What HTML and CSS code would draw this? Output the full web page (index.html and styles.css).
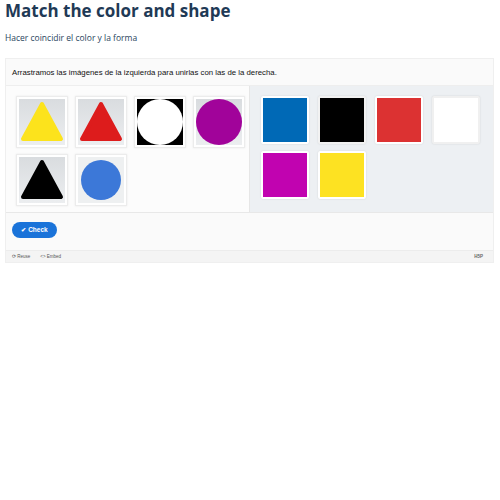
FILE: index.html
```html
<!DOCTYPE html>
<html>
<head>
<meta charset="utf-8">
<link rel="stylesheet" href="styles.css">
</head>
<body>
<div class="page">
  <h1 class="title">Match the color and shape</h1>
  <p class="sub">Hacer coincidir el color y la forma</p>
  <div class="h5p">
    <div class="intro">Arrastramos las imágenes de la izquierda para unirlas con las de la derecha.</div>
    <div class="dnd">
      <div class="col left">
        <div class="drag"><div class="img grey"><svg viewBox="0 0 46 46"><polygon points="23,5 42,40 4,40" fill="#fce31c" stroke="#fce31c" stroke-width="4" stroke-linejoin="round"/></svg></div></div>
        <div class="drag"><div class="img grey"><svg viewBox="0 0 46 46"><polygon points="23,5 42,40 4,40" fill="#dd1c1c" stroke="#dd1c1c" stroke-width="4" stroke-linejoin="round"/></svg></div></div>
        <div class="drag"><div class="img black"><svg viewBox="0 0 46 46"><circle cx="23" cy="23" r="23" fill="#fff"/></svg></div></div>
        <div class="drag"><div class="img grey"><svg viewBox="0 0 46 46"><circle cx="23" cy="23" r="23" fill="#a1039a"/></svg></div></div>
        <div class="drag"><div class="img grey"><svg viewBox="0 0 46 46"><polygon points="23,5 42,40 4,40" fill="#000" stroke="#000" stroke-width="4" stroke-linejoin="round"/></svg></div></div>
        <div class="drag"><div class="img light"><svg viewBox="0 0 46 46"><circle cx="23" cy="23" r="20" fill="#3c78d8"/></svg></div></div>
      </div>
      <div class="col right">
        <div class="drop c-blue"></div>
        <div class="drop c-black"></div>
        <div class="drop c-red"></div>
        <div class="drop c-white"></div>
        <div class="drop c-magenta"></div>
        <div class="drop c-yellow"></div>
      </div>
    </div>
    <div class="actions">
      <button class="check"><span class="tick">✔</span> Check</button>
    </div>
    <div class="footer">
      <span class="flink">⟳ Reuse</span>
      <span class="flink">&lt;&gt; Embed</span>
      <span class="logo">H5P</span>
    </div>
  </div>
</div>
</body>
</html>
```
FILE: styles.css
```css
html, body {
  margin: 0;
  padding: 0;
  background: #ffffff;
}
.page {
  padding: 0 6px 0 5px;
}
.title {
  font-family: "Open Sans", sans-serif;
  font-weight: 700;
  font-size: 17px;
  line-height: 22px;
  color: #1f3a56;
  margin: 0;
  padding-top: 0;
}
.sub {
  font-family: "Open Sans", sans-serif;
  font-size: 8.5px;
  color: #2a4560;
  margin: 10px 0 0 0;
  line-height: 12px;
}
.h5p {
  margin-top: 14px;
  border: 1px solid #efefef;
  background: #fafafa;
  font-family: "Liberation Sans", Arial, sans-serif;
}
.intro {
  font-size: 7.8px;
  color: #111;
  padding: 9px 6px 0 6px;
  height: 17px;
  line-height: 10px;
  border-bottom: 1px solid #eeeeee;
}
.dnd {
  display: grid;
  grid-template-columns: 244px 1fr;
  height: 126px;
  border-bottom: 1px solid #e8e8e8;
}
.col {
  display: flex;
  flex-wrap: wrap;
  align-content: flex-start;
}
.left {
  background: #fcfcfc;
  padding: 10px 0 0 10px;
  gap: 6px 7px;
  border-right: 1px solid #e6e6e6;
}
.right {
  background: #edf0f3;
  padding: 10px 0 0 11px;
  gap: 7px 9px;
}
.drag {
  width: 48px;
  height: 48px;
  padding: 1px;
  background: #fff;
  border: 1px solid #ececec;
  box-shadow: 0 0 2px rgba(0,0,0,0.08);
}
.img {
  width: 46px;
  height: 46px;
  margin: 1px;
}
.img svg {
  display: block;
  width: 46px;
  height: 46px;
}
.grey {
  background: linear-gradient(#d9dcdf, #eceef0);
}
.black {
  background: #000;
}
.light {
  background: #eef0f1;
}
.drop {
  width: 44px;
  height: 44px;
  border: 2px solid #fff;
  border-radius: 2px;
  box-shadow: 0 0 2px rgba(0,0,0,0.12);
}
.c-blue { background: #0069b6; }
.c-black { background: #000; border-color: #f2f2f2; }
.c-red { background: #dc3232; }
.c-white { background: #fff; border-color: #f0f0f0; }
.c-magenta { background: #c103b0; }
.c-yellow { background: #fde222; }
.actions {
  height: 37px;
  padding: 9px 0 0 6px;
  box-sizing: border-box;
}
.check {
  display: block;
  background: #1a73d9;
  color: #fff;
  border: none;
  border-radius: 9px;
  height: 16px;
  width: 45px;
  padding: 0;
  font-family: "Liberation Sans", Arial, sans-serif;
  font-size: 6.5px;
  font-weight: 700;
  line-height: 16px;
}
.tick {
  font-size: 6px;
}
.footer {
  display: flex;
  align-items: center;
  height: 11px;
  background: #f4f4f4;
  border-top: 1px solid #ececec;
  padding: 0 6px;
  font-size: 4.5px;
  color: #555;
  gap: 10px;
}
.logo {
  margin-left: auto;
  font-weight: 700;
  color: #666;
  margin-right: 4px;
}
```
